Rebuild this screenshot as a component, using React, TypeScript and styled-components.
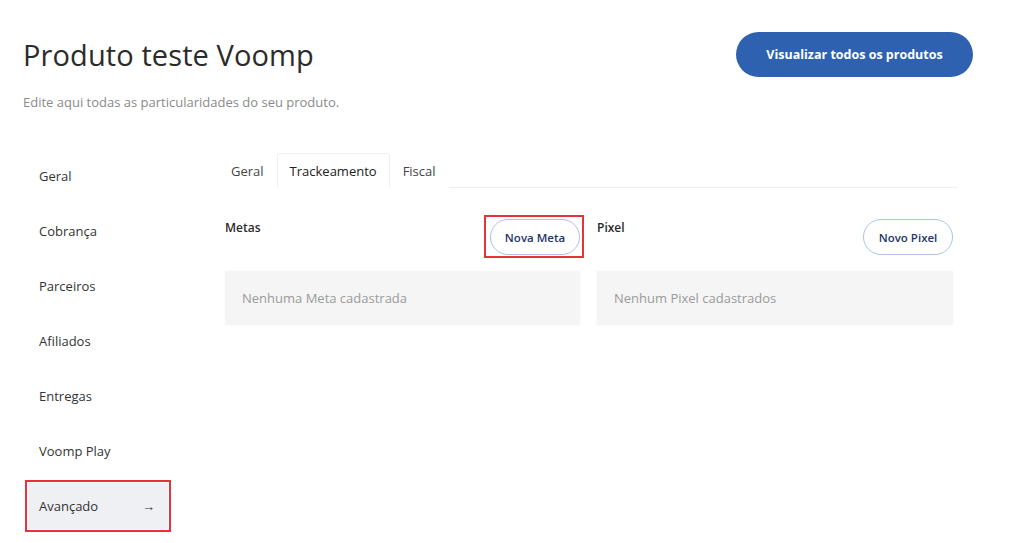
import React from "react";
import styled, { createGlobalStyle, css } from "styled-components";

const Global = createGlobalStyle`
  html, body { margin: 0; padding: 0; background: #ffffff; }
  body { font-family: "Open Sans", "Noto Sans", Arial, sans-serif; color: #333; }
  * { box-sizing: border-box; }
`;

const Page = styled.div`
  width: 1024px;
  height: 543px;
  padding: 32px 51px 0 23px;
  overflow: hidden;
`;

const Header = styled.header`
  display: flex;
  justify-content: space-between;
  align-items: flex-start;
`;

const TitleBlock = styled.div`
  display: flex;
  flex-direction: column;
  padding-top: 3px;
`;

const Title = styled.h1`
  margin: 0;
  font-size: 29px;
  line-height: 40px;
  font-weight: 500;
  color: #2b2b2b;
  letter-spacing: 0.1px;
`;

const Subtitle = styled.p`
  margin: 18px 0 0;
  font-size: 13px;
  line-height: 18px;
  color: #8a8a8a;
`;

const PrimaryButton = styled.button`
  width: 237px;
  height: 45px;
  border: none;
  border-radius: 23px;
  background: #2e62b0;
  color: #fff;
  font-family: inherit;
  font-size: 12.5px;
  font-weight: 700;
  cursor: pointer;
`;

const Main = styled.div`
  display: grid;
  grid-template-columns: 147px 740px;
  column-gap: 43px;
  margin-top: 42px;
  padding-left: 5px;
`;

const Nav = styled.nav`
  display: flex;
  flex-direction: column;
  gap: 9px;
`;

const NavItem = styled.div<{ $active?: boolean }>`
  height: 46px;
  display: flex;
  align-items: center;
  justify-content: space-between;
  padding: 0 13px 0 11px;
  font-size: 13px;
  color: #333;
  ${(p) =>
    p.$active &&
    css`
      background: #eef0f4;
      outline: 2px solid #e5323b;
      outline-offset: 1px;
      width: 140px;
    `}
`;

const Arrow = styled.span`
  font-size: 13px;
  color: #333;
`;

const Content = styled.div`
  display: flex;
  flex-direction: column;
`;

const Tabs = styled.div`
  display: flex;
  height: 35px;
  border-bottom: 1px solid #efefef;
`;

const Tab = styled.div<{ $active?: boolean }>`
  display: flex;
  align-items: center;
  padding: 0 ${(p) => (p.$active ? "12px" : "12px")};
  font-size: 13px;
  color: ${(p) => (p.$active ? "#222" : "#444")};
  font-weight: ${(p) => (p.$active ? 500 : 400)};
  border: 1px solid ${(p) => (p.$active ? "#eeeeee" : "transparent")};
  border-bottom: none;
  border-radius: 3px 3px 0 0;
  margin-bottom: -1px;
  background: #fff;
`;

const Sections = styled.div`
  display: grid;
  grid-template-columns: 355px 356px;
  column-gap: 17px;
  padding-left: 7px;
  margin-top: 27px;
`;

const Section = styled.section`
  display: flex;
  flex-direction: column;
`;

const SectionHead = styled.div`
  display: flex;
  justify-content: space-between;
  align-items: flex-start;
  height: 40px;
`;

const Label = styled.div`
  font-size: 12px;
  font-weight: 600;
  color: #2a2a2a;
  line-height: 14px;
  margin-top: 6px;
`;

const Marker = styled.div`
  border: 2px solid #e5323b;
  padding: 2px 2px 1px 4px;
  margin-right: -4px;
`;

const OutlineButton = styled.button`
  height: 36px;
  width: 90px;
  padding: 0;
  margin-top: 4px;
  border: 1px solid #a9c3ea;
  border-radius: 18px;
  background: #fff;
  color: #1f3568;
  font-family: inherit;
  font-size: 11.5px;
  font-weight: 600;
  cursor: pointer;
  ${Marker} & {
    margin-top: 0;
  }
`;

const Empty = styled.div`
  margin-top: 16px;
  height: 54px;
  display: flex;
  align-items: center;
  padding-left: 17px;
  background: #f5f5f5;
  box-shadow: 0 0 4px rgba(0, 0, 0, 0.03);
  font-size: 13px;
  color: #9a9a9a;
`;

const navItems = ["Geral", "Cobrança", "Parceiros", "Afiliados", "Entregas", "Voomp Play"];

export default function App() {
  return (
    <>
      <Global />
      <Page>
        <Header>
          <TitleBlock>
            <Title>Produto teste Voomp</Title>
            <Subtitle>Edite aqui todas as particularidades do seu produto.</Subtitle>
          </TitleBlock>
          <PrimaryButton>Visualizar todos os produtos</PrimaryButton>
        </Header>
        <Main>
          <Nav>
            {navItems.map((n) => (
              <NavItem key={n}>{n}</NavItem>
            ))}
            <NavItem $active>
              Avançado <Arrow>→</Arrow>
            </NavItem>
          </Nav>
          <Content>
            <Tabs>
              <Tab>Geral</Tab>
              <Tab $active>Trackeamento</Tab>
              <Tab>Fiscal</Tab>
            </Tabs>
            <Sections>
              <Section>
                <SectionHead>
                  <Label>Metas</Label>
                  <Marker>
                    <OutlineButton>Nova Meta</OutlineButton>
                  </Marker>
                </SectionHead>
                <Empty>Nenhuma Meta cadastrada</Empty>
              </Section>
              <Section>
                <SectionHead>
                  <Label>Pixel</Label>
                  <OutlineButton>Novo Pixel</OutlineButton>
                </SectionHead>
                <Empty>Nenhum Pixel cadastrados</Empty>
              </Section>
            </Sections>
          </Content>
        </Main>
      </Page>
    </>
  );
}
